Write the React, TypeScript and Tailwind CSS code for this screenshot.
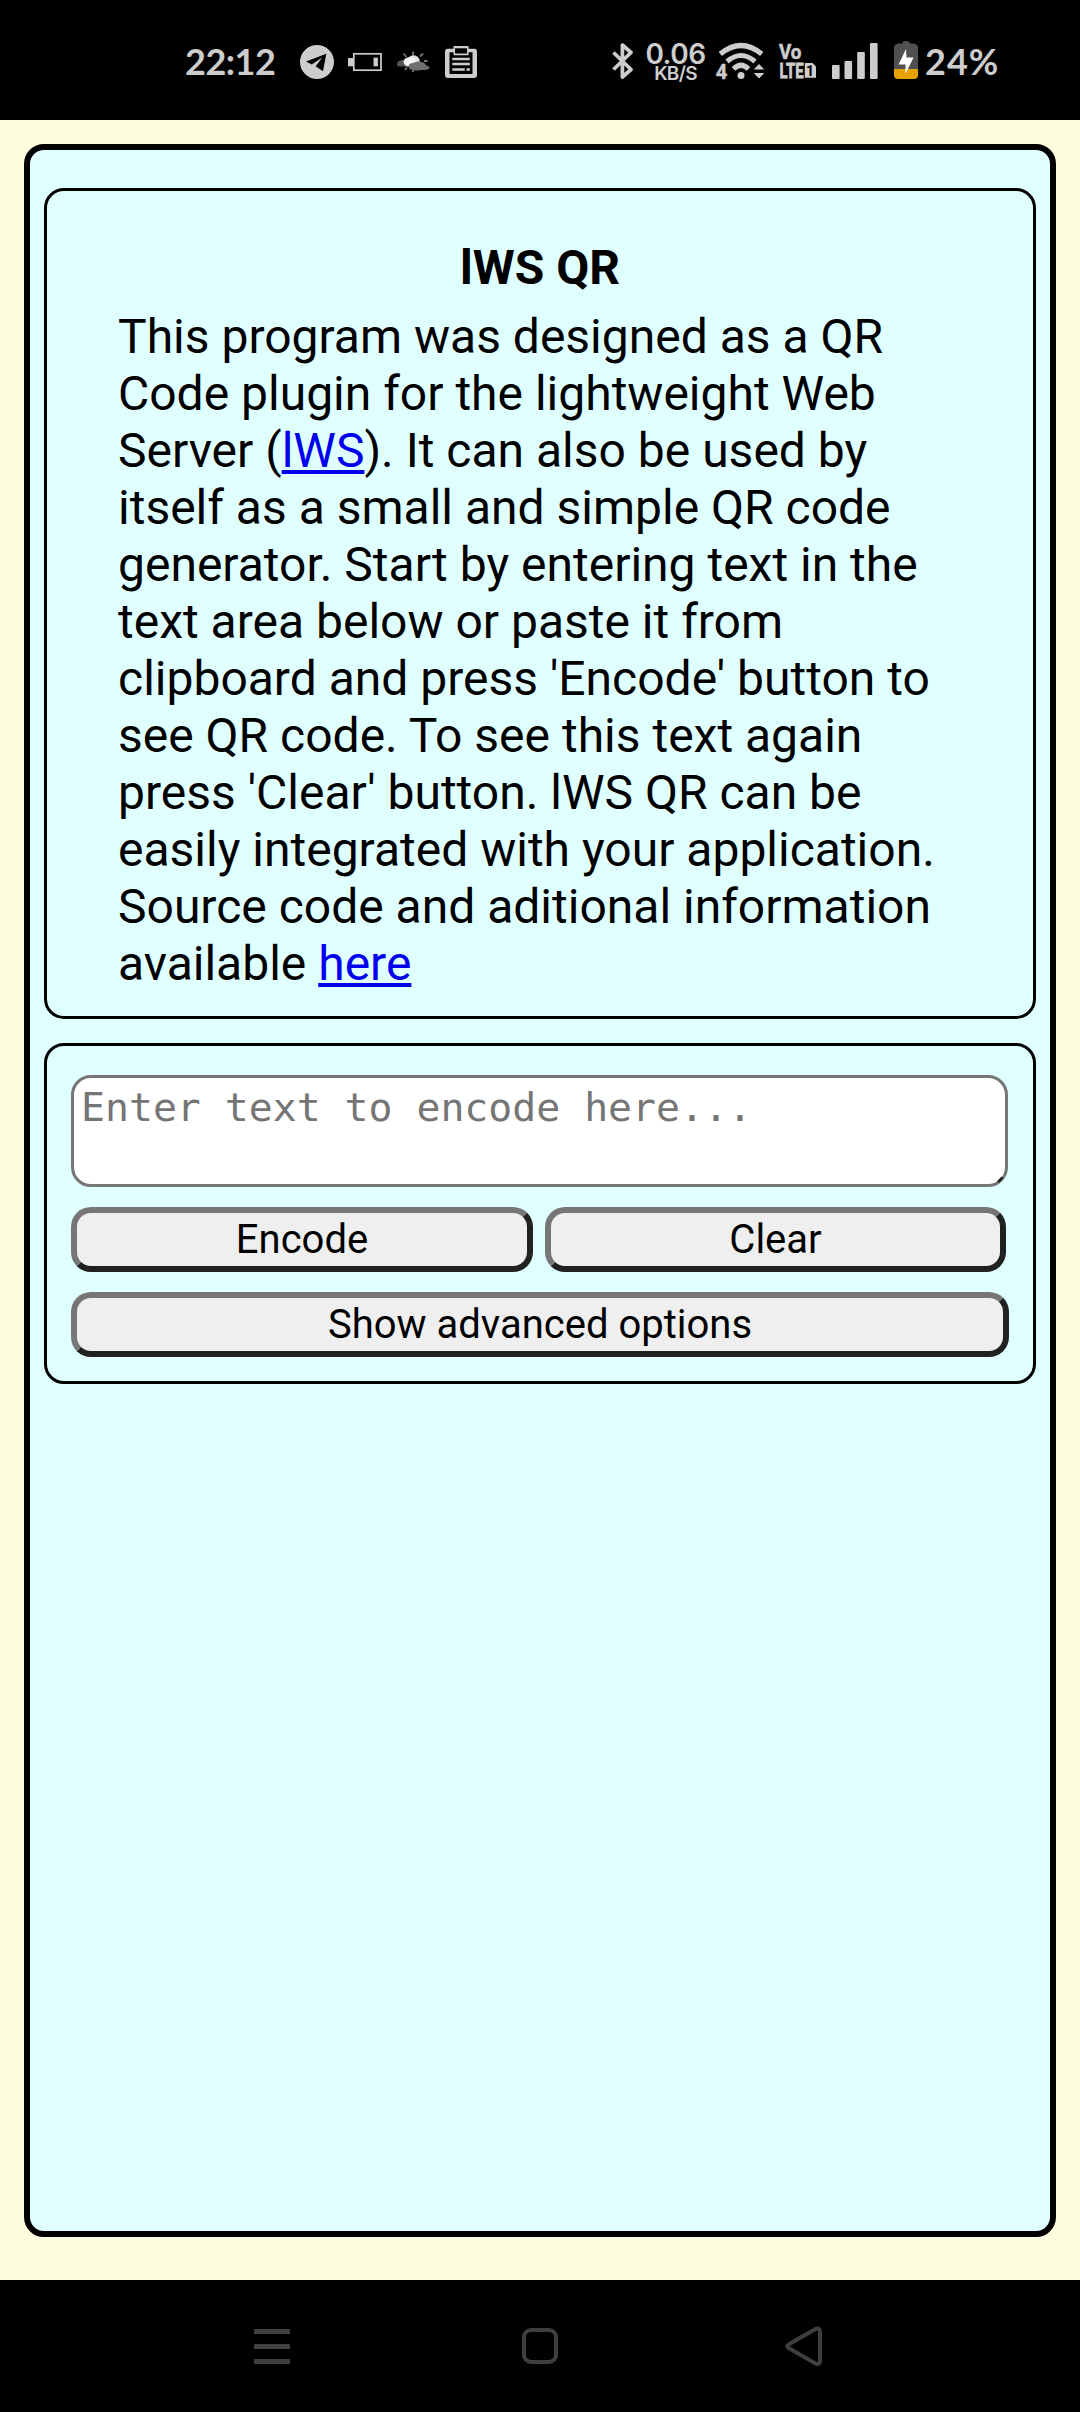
import React from "react";

const C = "#cdcdcd";

function StatusBar() {
  return (
    <header className="flex h-[120px] w-full bg-black text-[#cdcdcd]">
      <div className="ml-[185px] w-[92px] pt-[38px] font-['Lato'] text-[36px] leading-[46px] font-bold tracking-[-0.5px] whitespace-nowrap">22:12</div>

      <svg className="mt-[45px] ml-[23px] h-[34px] w-[34px] shrink-0" viewBox="300 45 34 34">
        <circle cx="317" cy="62" r="17" fill={C} />
        <path d="M306 61.4 L326.3 53.8 L323 71.2 L315.6 66.3 L322.3 57.6 L311.8 64.4 Z" fill="#000" />
      </svg>

      <svg className="mt-[52px] ml-[14px] h-[20px] w-[34px] shrink-0" viewBox="348 52 34 20">
        <rect x="353.8" y="53.8" width="27.2" height="16.4" fill="none" stroke={C} strokeWidth="1.7" />
        <rect x="348" y="58" width="5" height="8.3" fill={C} />
        <rect x="373.5" y="57.7" width="4.4" height="8.6" fill={C} />
      </svg>

      <svg className="mt-[50px] ml-[14px] h-[24px] w-[34px] shrink-0" viewBox="396 50 34 24">
        <path d="M413 51.5v4 M403.5 53.5l3 3.5 M423 53.5l-3 3 M424 61h3.500 M405 70l2-3 M413 67v5" stroke="#77736c" strokeWidth="1.8" />
        <path d="M397 64.500 Q397 61 400.500 60.500 Q403 59 406 61 L406 66.500 H399 Q397 66.500 397 64.500Z" fill="#555" />
        <circle cx="413.5" cy="61.5" r="6.3" fill="#e4e2de" />
        <ellipse cx="410" cy="62" rx="6.500" ry="4.800" fill="#f3f3f3" />
        <path d="M408.500 66.500 Q409 63 413 63 Q417 60.500 421 62 Q425 62 426 65.5 Q430 66 429.500 68.500 Q427 70.500 421 70 Q413 71.300 411 69.500 Q408.500 69 408.500 66.500Z" fill="#707070" />
      </svg>

      <svg className="mt-[46px] ml-[15px] h-[32px] w-[32px] shrink-0" viewBox="445 46 32 32">
        <path fillRule="evenodd" d="M448 48.8h5.5v-2.8h15v2.8h5.5q3 0 3 3V75q0 3-3 3H448q-3 0-3-3V51.800q0-3 3-3z M449.500 52.300V74h23V52.300h-4v3h-15v-3z" fill={C} />
        <rect x="455" y="48.3" width="12" height="5.200" fill="#000" />
        <path d="M452.300 59h17.500M452.300 64h17.500M452.300 69.500h12.500M466.500 69.500h3.300" stroke={C} strokeWidth="2.500" />
      </svg>

      <svg className="mt-[43px] ml-[135px] h-[36px] w-[22px] shrink-0" viewBox="612 43 22 36">
        <path d="M613.500 52.500 L631 69.500 L622.400 77 V45 L631 52.500 L613.500 69.500" fill="none" stroke={C} strokeWidth="3.700" strokeLinejoin="round" />
      </svg>

      <div className="ml-[11px] flex w-[61px] flex-col items-center pt-[40px] font-['Inter'] font-semibold">
        <span className="text-[28px] leading-[28px] tracking-[-0.500px]">0.06</span>
        <span className="-mt-[4px] text-[19px] leading-[20px] tracking-[-0.700px]">KB/S</span>
      </div>

      <svg className="mt-[42px] ml-[9px] h-[38px] w-[50px] shrink-0 overflow-visible" viewBox="715 42 50 38">
        <path d="M720.300 54 Q741 37 761.700 54" fill="none" stroke={C} strokeWidth="5.200" />
        <path d="M727 61.500 Q741 49.500 755 61.500" fill="none" stroke={C} strokeWidth="5" />
        <path d="M733.500 69 Q741 61.500 748.500 69" fill="none" stroke={C} strokeWidth="5" />
        <circle cx="741" cy="75.500" r="3.500" fill={C} />
        <path d="M753.700 69.500 L759 64 L764.300 69.500Z M753.700 73 L759 78.500 L764.300 73Z" fill={C} />
        <text x="715.700" y="78.800" fontFamily="Roboto" fontWeight="700" fontSize="20.500" textLength="11.500" lengthAdjust="spacingAndGlyphs" fill={C} stroke={C} strokeWidth="0.400">4</text>
      </svg>

      <svg className="mt-[42px] ml-[13px] h-[38px] w-[40px] shrink-0 overflow-visible" viewBox="778 42 40 38">
        <text x="779" y="59.200" fontFamily="Roboto" fontWeight="700" fontSize="19.500" textLength="22.500" lengthAdjust="spacingAndGlyphs" fill={C} stroke={C} strokeWidth="0.500">Vo</text>
        <text x="779.500" y="77.600" fontFamily="Roboto" fontWeight="700" fontSize="20.500" textLength="24" lengthAdjust="spacingAndGlyphs" fill={C} stroke={C} strokeWidth="0.800">LTE</text>
        <path d="M804.800 63h7.700l3.500 3.500V77.800H804.800Z" fill={C} />
        <text x="806" y="75.500" fontFamily="Roboto" fontWeight="700" fontSize="14" fill="#000">1</text>
      </svg>

      <svg className="mt-[43px] ml-[14px] h-[36px] w-[46px] shrink-0" viewBox="832 43 46 36" fill={C}>
        <rect x="832" y="65" width="7.600" height="14" rx="1" />
        <rect x="844.500" y="61" width="7.600" height="18" rx="1" />
        <rect x="857.200" y="52" width="7.600" height="27" rx="1" />
        <rect x="870" y="43" width="7.600" height="36" rx="1" />
      </svg>

      <svg className="mt-[41px] ml-[16px] h-[38px] w-[24px] shrink-0" viewBox="894 41 24 38">
        <path d="M898 43.500h4q.5-2.500 2.500-2.500h3q2 0 2.500 2.500h4q4 1 4 4V69H894V47.500q0-3 4-4z" fill="#505050" />
        <path d="M894 69h24v6q0 4-4 4h-16q-4 0-4-4z" fill="#e8a200" />
        <path d="M906 49 L898.500 64.500 H905.500 V74 L913.500 57.500 H906.500Z" fill="#fff" />
      </svg>

      <div className="ml-[7px] pt-[38px] font-['Lato'] text-[36px] leading-[46px] font-bold tracking-[1px]">24%</div>
    </header>
  );
}

function NavBar() {
  return (
    <nav className="flex h-[132px] w-full items-start bg-black">
      <svg className="mt-[48px] ml-[254px] h-[38px] w-[36px]" viewBox="254 2328 36 38" fill="#3f3f3f">
        <rect x="254" y="2329" width="36" height="5" rx="0.500" />
        <rect x="254" y="2344" width="36" height="5" rx="0.500" />
        <rect x="254" y="2359" width="36" height="5" rx="0.500" />
      </svg>
      <div className="mt-[48px] ml-[232px] h-[36px] w-[36px] rounded-[9px] border-[4.500px] border-[#3f3f3f]" />
      <svg className="mt-[46px] ml-[227px] h-[41px] w-[38px]" viewBox="785 2326 38 41">
        <path d="M788.500 2344.500 L815.500 2329 Q820 2327.500 820 2331.500 V2361 Q820 2365 815.500 2363.500 L788.500 2348 Q786 2346.300 788.500 2344.500Z" fill="none" stroke="#3f3f3f" strokeWidth="4" />
      </svg>
    </nav>
  );
}

const button =
  "h-[65px] rounded-[20px] border-[6px] border-t-[#767676] border-l-[#767676] border-r-[#212121] border-b-[#212121] bg-[#efefef] text-center text-[40px] leading-[53px] text-black";

export default function App() {
  return (
    <div className="flex h-[2412px] w-[1080px] flex-col overflow-hidden font-['Roboto',sans-serif] text-black">
      <StatusBar />
      <main className="flex h-[2160px] flex-col bg-[#fffde0] px-[24px] pt-[24px] pb-[43px]">
        <div className="flex flex-1 flex-col gap-[24px] rounded-[20px] border-[6px] border-black bg-[#e0ffff] px-[14px] pt-[38px]">
          <section className="h-[831px] rounded-[20px] border-[3px] border-black pt-[45px] pl-[71px]">
            <h1 className="-ml-[71px] text-center text-[48px] leading-[63px] font-bold">lWS QR</h1>
            <p className="mt-[9px] text-[48px] leading-[57px] whitespace-nowrap">
              This program was designed as a QR<br />
              Code plugin for the lightweight Web<br />
              Server (<a className="text-[#0000ee] underline">lWS</a>). It can also be used by<br />
              itself as a small and simple QR code<br />
              generator. Start by entering text in the<br />
              text area below or paste it from<br />
              clipboard and press 'Encode' button to<br />
              see QR code. To see this text again<br />
              press 'Clear' button. lWS QR can be<br />
              easily integrated with your application.<br />
              Source code and aditional information<br />
              available <a className="text-[#0000ee] underline">here</a>
            </p>
          </section>
          <section className="flex h-[341px] flex-col rounded-[20px] border-[3px] border-black pt-[29px] pl-[24px]">
            <div className="relative w-[937px]">
              <textarea
                className="block h-[112px] w-[937px] resize-none overflow-hidden rounded-[20px] border-[3px] border-[#767676] bg-white px-[7px] pt-[6px] font-['DejaVu_Sans_Mono',monospace] text-[39.800px] leading-[47px] placeholder:text-[#757575]"
                placeholder="Enter text to encode here..."
              />
              <svg className="absolute right-[4px] bottom-[4px] h-[7px] w-[7px]" viewBox="0 0 7 7">
                <path d="M1 6 L5.500 1.500" stroke="#212121" strokeWidth="2.500" />
              </svg>
            </div>
            <div className="mt-[20px] flex gap-[12px]">
              <button className={button + " w-[462px]"}>Encode</button>
              <button className={button + " w-[461px]"}>Clear</button>
            </div>
            <button className={button + " mt-[20px] w-[938px]"}>Show advanced options</button>
          </section>
        </div>
      </main>
      <NavBar />
    </div>
  );
}
